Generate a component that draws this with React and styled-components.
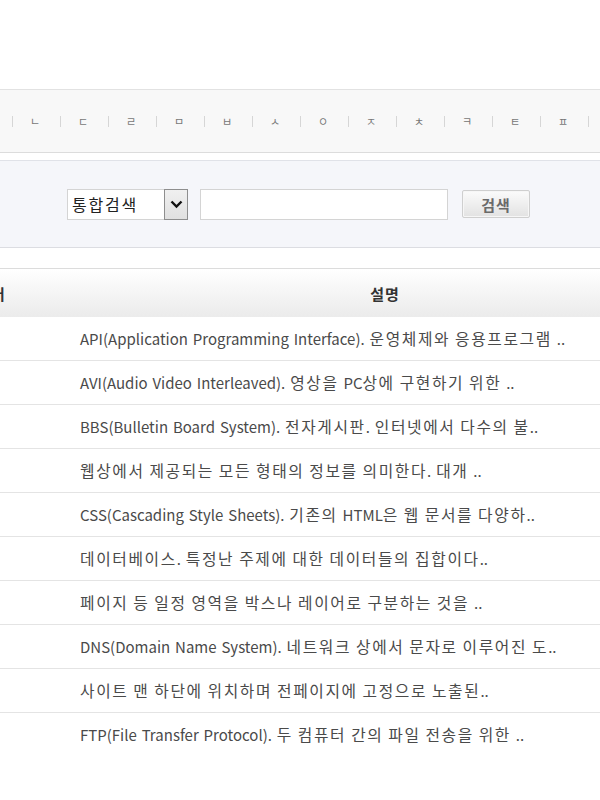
import React from "react";
import styled, { createGlobalStyle } from "styled-components";

const GlobalStyle = createGlobalStyle`
  html, body {
    margin: 0;
    padding: 0;
    background: #fff;
  }
  body {
    font-family: "Noto Sans CJK KR", "Noto Sans", sans-serif;
    color: #444;
    overflow: hidden;
  }
`;

const Page = styled.div`
  width: 600px;
  height: 800px;
  overflow: hidden;
  padding-top: 89px;
  box-sizing: border-box;
`;

const ConsonantBar = styled.div`
  height: 62px;
  border-top: 1px solid #e2e2e2;
  border-bottom: 1px solid #dcdcdc;
  background: #f8f8f8;
  display: flex;
  align-items: center;
`;

const ConsonantList = styled.ul`
  display: flex;
  margin: 0 0 0 -37px;
  padding: 0;
  list-style: none;
`;

const Consonant = styled.li`
  position: relative;
  width: 48px;
  flex: none;
  text-align: center;
  font-size: 11px;
  line-height: 14px;
  color: #777;

  &::before {
    content: "";
    position: absolute;
    left: 1px;
    top: 2px;
    width: 1px;
    height: 11px;
    background: #d6d6d6;
  }
`;

const SearchBox = styled.div`
  margin-top: 7px;
  height: 86px;
  border-top: 1px solid #e0e2e8;
  border-bottom: 1px solid #dcdde2;
  background: #f5f6fa;
  display: flex;
  align-items: center;
  padding-left: 67px;
`;

const SelectBox = styled.div`
  width: 121px;
  height: 31px;
  box-sizing: border-box;
  border: 1px solid #d4d4d4;
  background: #fff;
  display: flex;
  align-items: center;
  justify-content: space-between;
  padding-left: 4px;
  font-size: 16px;
  letter-spacing: 1.8px;
  color: #222;
`;

const DropButton = styled.span`
  width: 24px;
  height: 31px;
  margin-right: -1px;
  box-sizing: border-box;
  border: 1px solid #8e8e8e;
  background: linear-gradient(#f0f0f0, #e0e0e0);
  display: flex;
  align-items: center;
  justify-content: center;
`;

const TextInput = styled.input`
  margin-left: 12px;
  width: 248px;
  height: 31px;
  box-sizing: border-box;
  border: 1px solid #d4d4d4;
  background: #fff;
  outline: none;
`;

const SearchButton = styled.button`
  margin-left: 14px;
  width: 68px;
  height: 28px;
  box-sizing: border-box;
  border: 1px solid #cfcfcf;
  border-radius: 2px;
  background: linear-gradient(#fbfbfb, #e2e2e2);
  box-shadow: inset 0 0 0 1px #f6f6f6;
  font-family: inherit;
  font-size: 15px;
  font-weight: 700;
  letter-spacing: 1px;
  color: #6a6a6a;
  padding: 0;
`;

const Table = styled.div`
  margin-top: 20px;
  margin-left: -88px;
  width: 788px;
  border-top: 1px solid #dcdcdc;
`;

const HeaderRow = styled.div`
  display: flex;
  height: 48px;
  align-items: center;
  background: linear-gradient(#ffffff, #ebebeb);
  font-size: 15px;
  font-weight: 700;
  letter-spacing: 1px;
  color: #333;
`;

const Row = styled.div`
  display: flex;
  height: 43px;
  align-items: center;
  border-bottom: 1px solid ${(p) => (p.$last ? "transparent" : "#e4e4e4")};
  font-size: 15px;
  word-spacing: 1.5px;
  color: #4a4a4a;
`;

const TermCell = styled.div`
  width: 158px;
  flex: none;
  text-align: center;
`;

const DescCell = styled.div`
  flex: 1;
  padding-left: ${(p) => (p.$head ? "0" : "10px")};
  text-align: ${(p) => (p.$head ? "center" : "left")};
  white-space: nowrap;
`;

const Hangul = styled.span`
  font-size: 15.8px;
  letter-spacing: 1.6px;
`;

const consonants = ["ㄱ", "ㄴ", "ㄷ", "ㄹ", "ㅁ", "ㅂ", "ㅅ", "ㅇ", "ㅈ", "ㅊ", "ㅋ", "ㅌ", "ㅍ", "ㅎ"];

const rows = [
  "API(Application Programming Interface). 운영체제와 응용프로그램 ..",
  "AVI(Audio Video Interleaved). 영상을 PC상에 구현하기 위한 ..",
  "BBS(Bulletin Board System). 전자게시판. 인터넷에서 다수의 불..",
  "웹상에서 제공되는 모든 형태의 정보를 의미한다. 대개 ..",
  "CSS(Cascading Style Sheets). 기존의 HTML은 웹 문서를 다양하..",
  "데이터베이스. 특정난 주제에 대한 데이터들의 집합이다..",
  "페이지 등 일정 영역을 박스나 레이어로 구분하는 것을 ..",
  "DNS(Domain Name System). 네트워크 상에서 문자로 이루어진 도..",
  "사이트 맨 하단에 위치하며 전페이지에 고정으로 노출된..",
  "FTP(File Transfer Protocol). 두 컴퓨터 간의 파일 전송을 위한 ..",
];

// korean runs are set wider than latin ones, like the original font
const splitRuns = (text) =>
  text.split(/([가-힣]+)/).map((part, i) =>
    /[가-힣]/.test(part) ? <Hangul key={i}>{part}</Hangul> : part
  );

const Chevron = () => (
  <svg width="13" height="9" viewBox="0 0 13 9">
    <path d="M1.5 1.5 L6.5 6.5 L11.5 1.5" fill="none" stroke="#111" strokeWidth="2.4" />
  </svg>
);

export default function App() {
  return (
    <Page>
      <GlobalStyle />
      <ConsonantBar>
        <ConsonantList>
          {consonants.map((c) => (
            <Consonant key={c}>{c}</Consonant>
          ))}
        </ConsonantList>
      </ConsonantBar>
      <SearchBox>
        <SelectBox>
          통합검색
          <DropButton>
            <Chevron />
          </DropButton>
        </SelectBox>
        <TextInput type="text" />
        <SearchButton>검색</SearchButton>
      </SearchBox>
      <Table>
        <HeaderRow>
          <TermCell>용어</TermCell>
          <DescCell $head>설명</DescCell>
        </HeaderRow>
        {rows.map((r, i) => (
          <Row key={i} $last={i === rows.length - 1}>
            <TermCell />
            <DescCell>{splitRuns(r)}</DescCell>
          </Row>
        ))}
      </Table>
    </Page>
  );
}
